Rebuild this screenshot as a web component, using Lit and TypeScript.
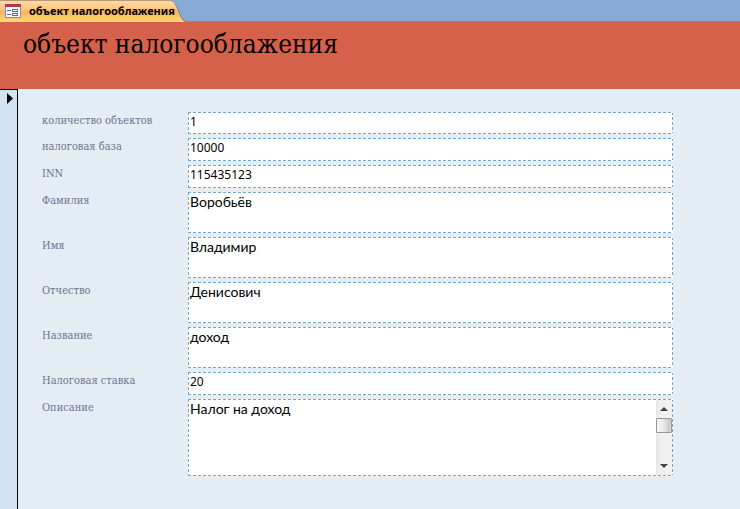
import { LitElement, html, css } from "lit";
import { customElement } from "lit/decorators.js";
import { classMap } from "lit/directives/class-map.js";

type Size = "short" | "line" | "block" | "memo";
interface Field {
  id: string;
  label: string;
  value: string;
  size: Size;
}

const FIELDS: Field[] = [
  { id: "count", label: "количество объектов", value: "1", size: "short" },
  { id: "base", label: "налоговая база", value: "10000", size: "line" },
  { id: "inn", label: "INN", value: "115435123", size: "line" },
  { id: "surname", label: "Фамилия", value: "Воробьёв", size: "block" },
  { id: "name", label: "Имя", value: "Владимир", size: "block" },
  { id: "patronymic", label: "Отчество", value: "Денисович", size: "block" },
  { id: "title", label: "Название", value: "доход", size: "block" },
  { id: "rate", label: "Налоговая ставка", value: "20", size: "line" },
  { id: "description", label: "Описание", value: "Налог на доход", size: "memo" },
];

@customElement("form-field")
export class FormField extends LitElement {
  static properties = { field: { attribute: false } };
  declare field: Field;

  static styles = css`
    :host { display: block; }
    .row { display: flex; align-items: flex-start; }
    .label {
      flex: none;
      width: 146px;
      padding-top: 2px;
      font: 11px/14px "DejaVu Serif Condensed", "DejaVu Serif", serif;
      color: #6d7390;
    }
    .frame {
      --across: repeating-linear-gradient(90deg, #6ea6d4 0 3px, #fff 3px 5px);
      --down: repeating-linear-gradient(180deg, #6ea6d4 0 3px, #fff 3px 5px);
      flex: 1;
      min-width: 0;
      display: flex;
      box-sizing: border-box;
      padding: 1px;
      background:
        var(--across) top / 100% 1px no-repeat,
        var(--across) bottom / 100% 1px no-repeat,
        var(--down) left / 1px 100% no-repeat,
        var(--down) right / 1px 100% no-repeat,
        #fff;
    }
    .short { height: 22px; }
    .line { height: 23px; }
    .block { height: 41px; }
    .memo { height: 77px; }
    .input {
      flex: 1;
      min-width: 0;
      box-sizing: border-box;
      margin: 0;
      padding: 0 1px;
      border: 0;
      outline: 0;
      background: transparent;
      resize: none;
      overflow: hidden;
      font: 14px/18px Lato, "Noto Sans", sans-serif;
      color: #000;
    }
    .number {
      height: 18px;
      font: 12px/18px "Noto Sans", sans-serif;
    }
    .scroll {
      flex: none;
      width: 16px;
      display: flex;
      flex-direction: column;
      background: linear-gradient(90deg, #e6e6e6, #f0f0f0 30%, #f0f0f0);
    }
    .arrow {
      flex: none;
      height: 18px;
      padding: 0;
      border: 0;
      background: none;
      display: flex;
      align-items: center;
      justify-content: center;
    }
    .thumb {
      flex: none;
      height: 15px;
      box-sizing: border-box;
      border: 1px solid #979797;
      border-radius: 1px;
      background: linear-gradient(90deg, #f5f5f5, #e9e9eb 45%, #c8c8cc 90%, #dcdcdc);
    }
    .track { flex: 1; }
  `;

  private scrollBar() {
    return html`<div class="scroll">
      <button class="arrow" aria-label="Вверх" type="button">
        <svg width="8" height="4" viewBox="0 0 8 4"><path d="M4 0 8 4H0Z" fill="#404040" /></svg>
      </button>
      <div class="thumb"></div>
      <div class="track"></div>
      <button class="arrow" aria-label="Вниз" type="button">
        <svg width="8" height="4" viewBox="0 0 8 4"><path d="M0 0H8L4 4Z" fill="#404040" /></svg>
      </button>
    </div>`;
  }

  render() {
    const { id, label, value, size } = this.field;
    const single = size === "line" || size === "short";
    return html`<div class="row">
      <label class="label" for=${id}>${label}</label>
      <div class=${classMap({ frame: true, [size]: true })}>
        ${single
          ? html`<input class="input number" id=${id} type="text" .value=${value} />`
          : html`<textarea class="input" id=${id} .value=${value}></textarea>`}
        ${size === "memo" ? this.scrollBar() : null}
      </div>
    </div>`;
  }
}

@customElement("app-root")
export class AppRoot extends LitElement {
  static styles = css`
    :host {
      display: flex;
      flex-direction: column;
      min-height: 100vh;
      background: #e4edf4;
    }
    .tabs {
      flex: none;
      display: flex;
      height: 22px;
      box-sizing: border-box;
      background: #88aad7;
      box-shadow: inset 0 -1px #6b8fc0;
    }
    .tab {
      display: flex;
      padding: 0;
      border: 0;
      background: none;
      font: bold 11px/20px "Noto Sans", sans-serif;
      color: #000;
    }
    .tab-body {
      display: flex;
      align-items: center;
      gap: 8px;
      height: 22px;
      padding-left: 5px;
      box-sizing: border-box;
      background: linear-gradient(#fddcae, #fdc577 45%, #fdb254 50%, #ffdb75);
      box-shadow: inset 0 1px #b49a78;
    }
    .tab-text { margin-right: -4px; z-index: 1; }
    .tab-end { display: block; }
    .head {
      flex: none;
      height: 67px;
      box-sizing: border-box;
      padding: 4px 23px;
      background: #d5614a;
    }
    .title {
      margin: 0;
      font: 26px/36px "DejaVu Serif Condensed", "DejaVu Serif", serif;
      color: #000;
    }
    .body { flex: 1; display: flex; }
    .selector {
      flex: none;
      width: 18px;
      box-sizing: border-box;
      padding: 3px 0 0 7px;
      border-top: 1px solid #000;
      border-right: 1px solid #000;
      background: #d4e3f3;
    }
    .marker { display: block; }
    .form {
      flex: 1;
      display: flex;
      flex-direction: column;
      gap: 4px;
      padding: 23px 67px 24px 24px;
    }
  `;

  render() {
    return html`
      <nav class="tabs">
        <button class="tab" type="button">
          <span class="tab-body">
            <svg width="16" height="16" viewBox="0 0 16 16" shape-rendering="crispEdges">
              <rect x="0" y="1" width="16" height="14" fill="#7b8fb4" />
              <rect x="1" y="4" width="14" height="10" fill="#f2f6fc" />
              <rect x="0" y="1" width="16" height="3" fill="#b23a50" />
              <path d="M2 7.500h4M2 11.500h4" stroke="#56719f" />
              <path d="M7.500 6.500h5v2h-5zM7.500 10.500h5v2h-5z" fill="#fff" stroke="#56719f" />
            </svg>
            <span class="tab-text">объект налогооблажения</span>
          </span>
          <svg class="tab-end" width="16" height="22" viewBox="0 0 16 22">
            <defs>
              <linearGradient id="g" x1="0" y1="0" x2="0" y2="1">
                <stop offset="0" stop-color="#fddcae" />
                <stop offset=".45" stop-color="#fdc577" />
                <stop offset=".5" stop-color="#fdb254" />
                <stop offset="1" stop-color="#ffdb75" />
              </linearGradient>
            </defs>
            <path d="M0 0C6 1 8 17 13 21L16 22H0Z" fill="url(#g)" />
            <path d="M0 .5C6 1 8 17 13 21L16 21.500" fill="none" stroke="#8a8575" />
          </svg>
        </button>
      </nav>
      <header class="head"><h1 class="title">объект налогооблажения</h1></header>
      <main class="body">
        <div class="selector">
          <svg class="marker" width="6" height="11" viewBox="0 0 6 11"><path d="M0 0 6 5.500 0 11Z" /></svg>
        </div>
        <form class="form">
          ${FIELDS.map((field) => html`<form-field .field=${field}></form-field>`)}
        </form>
      </main>
    `;
  }
}
